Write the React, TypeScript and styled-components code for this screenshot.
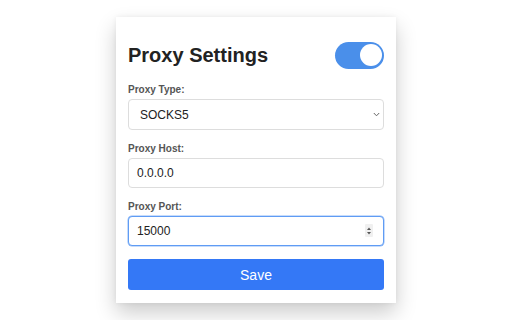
import styled, { createGlobalStyle } from 'styled-components';

const GlobalStyle = createGlobalStyle`
	html, body {
		margin: 0;
		padding: 0;
		background: #fff;
		font-family: 'Liberation Sans', Arial, sans-serif;
	}
	* {
		box-sizing: border-box;
	}
`;

const Page = styled.div`
	width: 512px;
	height: 320px;
	padding-top: 17px;
	display: flex;
	justify-content: center;
	align-items: flex-start;
	overflow: hidden;
`;

const Card = styled.div`
	width: 280px;
	padding: 24px 12px 13px;
	background: #fff;
	box-shadow: 0 10px 20px rgba(0, 0, 0, 0.2), 0 0 5px rgba(0, 0, 0, 0.06);
`;

const Header = styled.div`
	height: 28px;
	margin-bottom: 15px;
	display: flex;
	align-items: center;
	justify-content: space-between;
`;

const Title = styled.h1`
	margin: 0;
	font-size: 20px;
	line-height: 28px;
	font-weight: 700;
	color: #222;
`;

const Toggle = styled.div<{ $on: boolean }>`
	position: relative;
	width: 49px;
	height: 27px;
	border-radius: 14px;
	background: ${(p) => (p.$on ? '#4a8fea' : '#ccc')};

	&::after {
		content: '';
		position: absolute;
		top: 2.5px;
		${(p) => (p.$on ? 'right: 2.5px;' : 'left: 2.5px;')}
		width: 22px;
		height: 22px;
		border-radius: 50%;
		background: #fff;
	}
`;

const Group = styled.div`
	margin-bottom: 13px;
`;

const Label = styled.label`
	display: block;
	margin-bottom: 3px;
	font-size: 10px;
	line-height: 12px;
	font-weight: 700;
	color: #555;
`;

const FieldWrap = styled.div`
	position: relative;
`;

const Field = styled.input<{ $focused?: boolean }>`
	display: block;
	width: 100%;
	height: 30px;
	padding: 0 8px;
	border: 1px solid ${(p) => (p.$focused ? '#5f9cf4' : '#ddd')};
	border-radius: 4px;
	box-shadow: ${(p) => (p.$focused ? '0 0 0 0.5px #8fb9f7' : 'none')};
	font-family: inherit;
	font-size: 12px;
	color: #222;
	background: #fff;
	outline: none;
`;

const Select = styled.select`
	display: block;
	width: 100%;
	height: 31px;
	padding: 0 11px;
	border: 1px solid #ddd;
	border-radius: 4px;
	font-family: inherit;
	font-size: 12px;
	color: #222;
	background: #fff;
	appearance: none;
	outline: none;
`;

const Chevron = styled.svg`
	position: absolute;
	right: 4px;
	top: 13px;
	width: 7px;
	height: 5px;
	pointer-events: none;
`;

const Spinner = styled.div`
	position: absolute;
	right: 11px;
	top: 8px;
	width: 8px;
	height: 13px;
	border-radius: 1px;
	background: #f0f0f0;
	display: flex;
	flex-direction: column;
	align-items: center;
	justify-content: center;
	gap: 2px;
	pointer-events: none;
`;

const SaveButton = styled.button`
	display: block;
	width: 100%;
	height: 31px;
	border: none;
	border-radius: 3px;
	background: #3478f6;
	color: #fff;
	font-family: inherit;
	font-size: 14px;
	cursor: pointer;
`;

const App = () => {
	return (
		<>
			<GlobalStyle />
			<Page>
				<Card>
					<Header>
						<Title>Proxy Settings</Title>
						<Toggle $on />
					</Header>
					<Group>
						<Label>Proxy Type:</Label>
						<FieldWrap>
							<Select defaultValue="socks5">
								<option value="http">HTTP</option>
								<option value="socks5">SOCKS5</option>
							</Select>
							<Chevron viewBox="0 0 7 5">
								<path d="M0.8 1 L3.5 3.8 L6.2 1" fill="none" stroke="#666" strokeWidth="1" />
							</Chevron>
						</FieldWrap>
					</Group>
					<Group>
						<Label>Proxy Host:</Label>
						<Field type="text" defaultValue="0.0.0.0" />
					</Group>
					<Group>
						<Label>Proxy Port:</Label>
						<FieldWrap>
							<Field type="text" defaultValue="15000" $focused />
							<Spinner>
								<svg width="4" height="3" viewBox="0 0 4 3">
									<path d="M0 3 L2 0.5 L4 3 Z" fill="#555" />
								</svg>
								<svg width="4" height="3" viewBox="0 0 4 3">
									<path d="M0 0 L2 2.5 L4 0 Z" fill="#555" />
								</svg>
							</Spinner>
						</FieldWrap>
					</Group>
					<SaveButton>Save</SaveButton>
				</Card>
			</Page>
		</>
	);
};

export default App;
